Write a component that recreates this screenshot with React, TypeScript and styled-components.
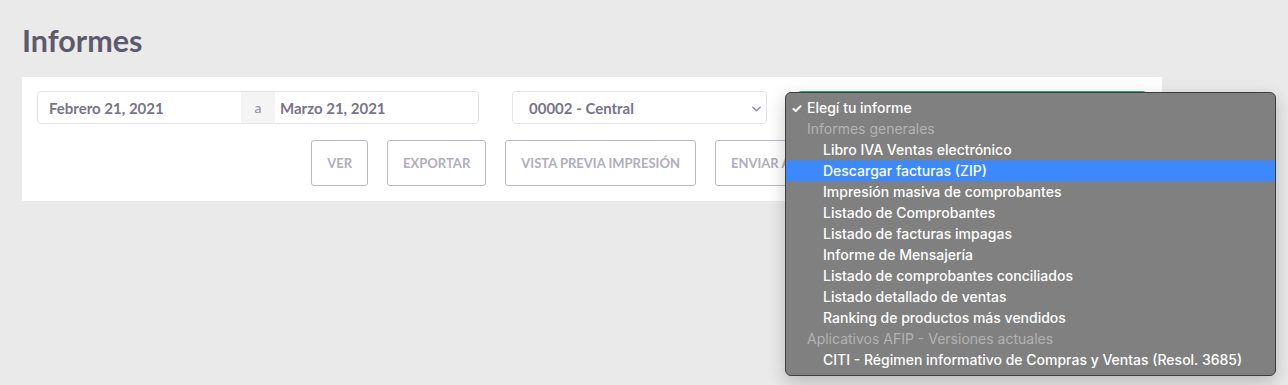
import React from 'react'
import styled, { createGlobalStyle } from 'styled-components'

const GlobalStyle = createGlobalStyle`
    body {
        margin: 0;
        background: #eaeaea;
        font-family: Lato, "Noto Sans", sans-serif;
    }
`

const groups = [
    {
        label: 'Informes generales',
        items: [
            'Libro IVA Ventas electrónico',
            'Descargar facturas (ZIP)',
            'Impresión masiva de comprobantes',
            'Listado de Comprobantes',
            'Listado de facturas impagas',
            'Informe de Mensajería',
            'Listado de comprobantes conciliados',
            'Listado detallado de ventas',
            'Ranking de productos más vendidos',
        ],
    },
    {
        label: 'Aplicativos AFIP - Versiones actuales',
        items: ['CITI - Régimen informativo de Compras y Ventas (Resol. 3685)'],
    },
]

export default function App() {
    return (
        <Page>
            <GlobalStyle />
            <Title>Informes</Title>
            <Card>
                <Row>
                    <DateGroup>
                        <DateInput $pad={11} $width={203}>Febrero 21, 2021</DateInput>
                        <Addon>a</Addon>
                        <DateInput $pad={5}>Marzo 21, 2021</DateInput>
                    </DateGroup>
                    <Select $width={255}>
                        00002 - Central
                        <Chevron viewBox="0 0 10 6">
                            <path d="M1 1l4 4 4-4" fill="none" stroke="#8d8a9a" strokeWidth="1.6" strokeLinecap="round" strokeLinejoin="round" />
                        </Chevron>
                    </Select>
                    <ReportWrap>
                        <Select $width={350} $focused />
                        <Menu>
                            <MenuItem $level={0}>
                                <Check>✓</Check>Elegí tu informe
                            </MenuItem>
                            {groups.map((g) => (
                                <React.Fragment key={g.label}>
                                    <GroupLabel>{g.label}</GroupLabel>
                                    {g.items.map((item) => (
                                        <MenuItem key={item} $level={1} $active={item === 'Descargar facturas (ZIP)'}>
                                            {item}
                                        </MenuItem>
                                    ))}
                                </React.Fragment>
                            ))}
                        </Menu>
                    </ReportWrap>
                </Row>
                <Buttons>
                    <Button>Ver</Button>
                    <Button>Exportar</Button>
                    <Button>Vista previa impresión</Button>
                    <Button>Enviar a mi e-mail</Button>
                </Buttons>
            </Card>
        </Page>
    )
}

const Page = styled.div`
    min-height: 100vh;
    box-sizing: border-box;
    padding: 22px 126px 40px 22px;
`
const Title = styled.h1`
    margin: 0 0 18px;
    font-size: 30.5px;
    line-height: 37px;
    font-weight: 700;
    color: #5e5a6c;
`
const Card = styled.div`
    background: #fff;
    padding: 14px 15px 15px;
`
const Row = styled.div`
    display: flex;
    align-items: center;
`
const DateGroup = styled.div`
    display: flex;
    width: 442px;
    height: 33px;
    border: 1px solid #e4e3e8;
    border-radius: 4px;
    box-sizing: border-box;
    overflow: hidden;
    margin-right: 33px;
`
const DateInput = styled.div<{ $pad: number; $width?: number }>`
    flex: ${(p) => (p.$width ? `0 0 ${p.$width}px` : '1')};
    box-sizing: border-box;
    display: flex;
    align-items: center;
    padding-left: ${(p) => p.$pad}px;
    font-size: 15px;
    font-weight: 700;
    color: #78748a;
`
const Addon = styled.div`
    flex: 0 0 34px;
    display: flex;
    align-items: center;
    justify-content: center;
    background: #f4f4f5;
    color: #8e8c96;
    font-size: 14px;
`
const Select = styled.div<{ $width: number; $focused?: boolean }>`
    position: relative;
    width: ${(p) => p.$width}px;
    height: 33px;
    box-sizing: border-box;
    border: 1px solid ${(p) => (p.$focused ? '#2fae7c' : '#e4e3e8')};
    border-radius: 4px;
    display: flex;
    align-items: center;
    padding-left: 16px;
    font-size: 15px;
    font-weight: 700;
    color: #78748a;
`
const Chevron = styled.svg`
    position: absolute;
    right: 5px;
    top: 14px;
    width: 9px;
    height: 6px;
`
const ReportWrap = styled.div`
    position: relative;
    margin-left: 30px;
`
const Menu = styled.div`
    position: absolute;
    left: -12px;
    top: 1px;
    width: 491px;
    box-sizing: border-box;
    padding: 4px 0 5px;
    background: #808080;
    border: 1px solid #3e3e3e;
    border-radius: 6px;
    box-shadow: 0 6px 18px rgba(0, 0, 0, 0.22);
    font-family: Inter, "Noto Sans", sans-serif;
    font-size: 14px;
    font-weight: 500;
    z-index: 2;
`
const MenuItem = styled.div<{ $level: number; $active?: boolean }>`
    height: 21px;
    line-height: 21px;
    padding-left: ${(p) => (p.$level ? 37 : 5)}px;
    color: #fff;
    white-space: nowrap;
    background: ${(p) => (p.$active ? '#3b89fc' : 'transparent')};
`
const Check = styled.span`
    display: inline-block;
    width: 16px;
    font-size: 13px;
    font-weight: 700;
`
const GroupLabel = styled.div`
    height: 21px;
    line-height: 21px;
    padding-left: 21px;
    color: #b3b3b3;
    font-weight: 400;
    white-space: nowrap;
`
const Buttons = styled.div`
    display: flex;
    justify-content: center;
    gap: 19px;
    margin-top: 16px;
`
const Button = styled.button`
    height: 46px;
    padding: 0 15px;
    background: #fff;
    border: 1px solid #bbb8c4;
    border-radius: 3px;
    font-family: Lato, sans-serif;
    font-size: 13px;
    font-weight: 700;
    text-transform: uppercase;
    color: #b1aebb;
`
